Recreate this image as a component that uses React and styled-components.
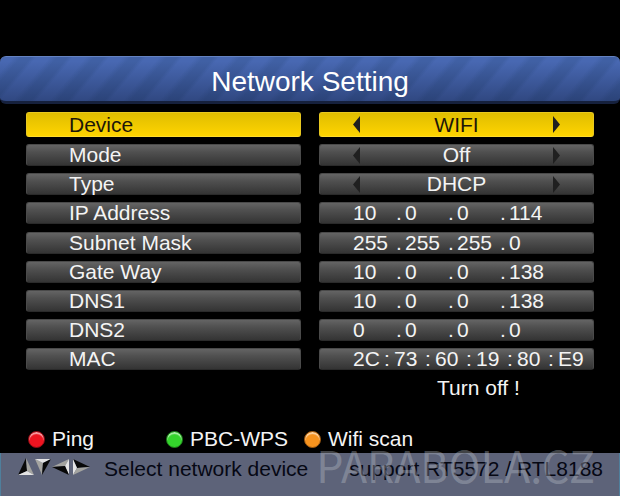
import React, { useState } from 'react';
import styled, { createGlobalStyle, css } from 'styled-components';

const GlobalStyle = createGlobalStyle`
  * {
    box-sizing: border-box;
  }

  body {
    margin: 0;
    background: #000;
  }
`;

const barFill = css`
  display: flex;
  align-items: center;
  min-width: 0;
  background: ${p => p.$active
    ? 'linear-gradient(#dfbd00, #ffd400)'
    : 'linear-gradient(#646464 0%, #505050 35%, #343434 100%)'};
  border: 1px solid ${p => p.$active ? '#e8c820' : '#4a4a4a'};
  border-bottom-color: ${p => p.$active ? '#ffdc2c' : '#2a2a2a'};
  color: ${p => p.$active ? '#1c1608' : '#f4f4f4'};
  border-radius: 3px;
`;

const Screen = styled.div`
  display: flex;
  flex-direction: column;
  min-height: 100vh;
  padding-top: 56px;
  background: #000;
  color: #f4f4f4;
  font-family: 'Liberation Sans', Arial, sans-serif;
  font-size: 21px;
  line-height: 22px;
`;

const Header = styled.header`
  padding: 9px 16px 3px;
  border-top: 1px solid #6482c0;
  border-bottom: 3px solid #16213d;
  border-radius: 6px;
  background:
    linear-gradient(rgba(10, 20, 50, 0) 10%, rgba(10, 20, 50, 0.38) 100%),
    repeating-linear-gradient(130deg, #4868b2 0 10px, #4060a4 16px 24px, #4868b2 28px);
  text-align: center;
`;

const Title = styled.h1`
  margin: 0;
  color: #fff;
  font-size: 28px;
  font-weight: 400;
  line-height: 32px;
`;

const Settings = styled.main`
  display: flex;
  flex-direction: column;
  justify-content: space-between;
  min-height: 258px;
  margin-top: 8px;
  padding: 0 26px;
`;

const Row = styled.div`
  display: grid;
  grid-template-columns: repeat(2, minmax(0, 1fr));
  gap: 18px;
  height: ${p => p.$active ? 25 : 22}px;
  line-height: 20px;
`;

const Name = styled.label`
  ${barFill}
  padding-left: 42px;
`;

const Value = styled.div`
  ${barFill}
  padding: 0 33px;
`;

const Choice = styled.output`
  flex: 1;
  text-align: center;
`;

const Step = styled.button`
  display: flex;
  padding: 0;
  border: 0;
  background: none;
  color: #202020;
  cursor: pointer;
`;

const Fields = styled.div`
  display: flex;
  align-items: baseline;
  height: 20px;
`;

const Octet = styled.input`
  flex: none;
  width: ${p => p.$width}px;
  height: 20px;
  padding: 0;
  border: 0;
  outline: 0;
  background: none;
  color: inherit;
  font: inherit;
`;

const Separator = styled.span`
  flex: none;
  width: ${p => p.$width}px;
`;

const Notice = styled.p`
  margin: 7px 26px 0;
  padding-left: calc(50% + 101px);
`;

const Actions = styled.div`
  display: grid;
  grid-template-columns: repeat(4, 1fr);
  margin-top: auto;
  padding: 0 40px 3px 28px;
`;

const Action = styled.button`
  display: flex;
  align-items: center;
  gap: 7px;
  padding: 0;
  border: 0;
  background: none;
  color: inherit;
  font: inherit;
  white-space: nowrap;
  cursor: pointer;
`;

const Dot = styled.span`
  width: 17px;
  height: 17px;
  border-radius: 50%;
  border: 1px solid ${p => p.$edge};
  background: ${p => p.$color};
  box-shadow: inset 0 2px 1px rgba(255, 255, 255, 0.6);
`;

const Footer = styled.footer`
  position: relative;
  display: flex;
  align-items: flex-start;
  height: 43px;
  padding: 5px 16px 0;
  border: solid #4f7f9c;
  border-width: 0 1px;
  background: #5d6379;
  color: #060814;
`;

const Hint = styled.span`
  margin-left: 13px;
`;

const Support = styled.span`
  margin-left: auto;
`;

const Watermark = styled.span`
  position: absolute;
  right: 24px;
  bottom: 4px;
  color: rgba(190, 195, 205, 0.36);
  font-family: 'Noto Sans CJK SC', sans-serif;
  font-size: 43px;
  line-height: 56px;
  pointer-events: none;
`;

const Triangle = ({ flip }) => (
  <svg width="7" height="17" viewBox="0 0 7 17" fill="currentColor">
    <path d={flip ? 'M0 0 7 8.5 0 17Z' : 'M7 0 0 8.5 7 17Z'} />
  </svg>
);

const Compass = () => (
  <svg width="74" height="18" viewBox="0 0 74 18" role="img" aria-label="Arrow keys">
    <path fill="#080808" d="M9 0 1 17 10 13Z" />
    <path fill="#a4a4a0" d="M9 0 17 17 10 13Z" />
    <path fill="#e4e4e4" d="M1 17 10 13 17 17Z" />
    <path fill="#a4a4a0" d="M18 1 26 5 25 17Z" />
    <path fill="#e4e4e4" d="M18 1 26 5 34 1Z" />
    <path fill="#080808" d="M34 1 26 5 25 17Z" />
    <path fill="#a4a4a0" d="M35 9 52 1 48 8Z" />
    <path fill="#e4e4e4" d="M52 1 48 8 52 17Z" />
    <path fill="#080808" d="M35 9 48 8 52 17Z" />
    <path fill="#080808" d="M56 1 73 9 60 10Z" />
    <path fill="#e4e4e4" d="M56 1 60 10 56 17Z" />
    <path fill="#a4a4a0" d="M56 17 73 9 60 10Z" />
  </svg>
);

const choices = [
  { id: 'device', name: 'Device', options: ['WIFI', 'LAN'], active: true },
  { id: 'mode', name: 'Mode', options: ['Off', 'On'] },
  { id: 'type', name: 'Type', options: ['DHCP', 'Static'] },
];

const addresses = [
  { id: 'ip', name: 'IP Address', parts: ['10', '0', '0', '114'] },
  { id: 'mask', name: 'Subnet Mask', parts: ['255', '255', '255', '0'] },
  { id: 'gateway', name: 'Gate Way', parts: ['10', '0', '0', '138'] },
  { id: 'dns1', name: 'DNS1', parts: ['10', '0', '0', '138'] },
  { id: 'dns2', name: 'DNS2', parts: ['0', '0', '0', '0'] },
  { id: 'mac', name: 'MAC', parts: ['2C', '73', '60', '19', '80', 'E9'], mac: true },
];

const ChoiceRow = ({ id, name, options, active }) => {
  const [index, setIndex] = useState(0);
  const next = () => setIndex((index + 1) % options.length);
  const previous = () => setIndex((index + options.length - 1) % options.length);

  return (
    <Row $active={active}>
      <Name htmlFor={id} $active={active}>{name}</Name>
      <Value $active={active}>
        <Step type="button" aria-label={`Previous ${name}`} onClick={previous}><Triangle /></Step>
        <Choice id={id}>{options[index]}</Choice>
        <Step type="button" aria-label={`Next ${name}`} onClick={next}><Triangle flip /></Step>
      </Value>
    </Row>
  );
};

const AddressRow = ({ id, name, parts, mac }) => (
  <Row>
    <Name htmlFor={`${id}-0`}>{name}</Name>
    <Value>
      <Fields>
        {parts.map((part, i) => (
          <React.Fragment key={i}>
            {i > 0 && <Separator $width={mac ? 10 : 9}>{mac ? ':' : '.'}</Separator>}
            <Octet
              id={`${id}-${i}`}
              aria-label={`${name} ${i + 1}`}
              defaultValue={part}
              maxLength={mac ? 2 : 3}
              $width={mac ? 31 : 43}
            />
          </React.Fragment>
        ))}
      </Fields>
    </Value>
  </Row>
);

const App = () => (
  <>
    <GlobalStyle />
    <Screen>
      <Header>
        <Title>Network Setting</Title>
      </Header>
      <Settings>
        {choices.map(item => <ChoiceRow key={item.id} {...item} />)}
        {addresses.map(item => <AddressRow key={item.id} {...item} />)}
      </Settings>
      <Notice>Turn off !</Notice>
      <Actions>
        <Action type="button"><Dot $color="#ee1420" $edge="#8c0c14" />Ping</Action>
        <Action type="button"><Dot $color="#34d42c" $edge="#1c7c18" />PBC-WPS</Action>
        <Action type="button"><Dot $color="#f7931e" $edge="#a05a10" />Wifi scan</Action>
      </Actions>
      <Footer>
        <Compass />
        <Hint>Select network device</Hint>
        <Support>support RT5572 / RTL8188</Support>
        <Watermark>PARABOLA.CZ</Watermark>
      </Footer>
    </Screen>
  </>
);

export default App;
